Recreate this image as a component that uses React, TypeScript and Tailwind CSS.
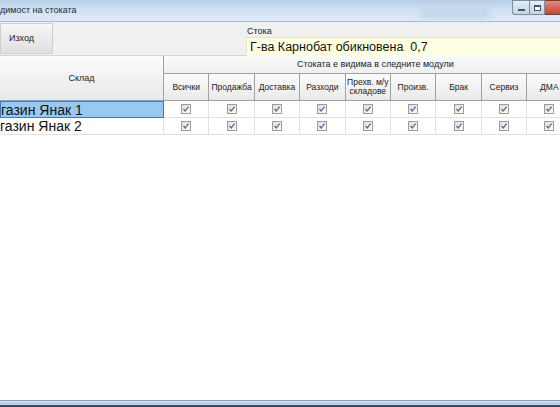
import React from 'react';

const modules = ['Всички', 'Продажба', 'Доставка', 'Разходи', 'Прехв. м/у складове', 'Произв.', 'Брак', 'Сервиз', 'ДМА'];
const rows = ['газин Янак 1', 'газин Янак 2'];

function Check() {
  return (
    <svg width="10" height="10" viewBox="0 0 10 10">
      <defs>
        <linearGradient id="cb" x1="0" y1="0" x2="1" y2="1">
          <stop offset="0" stopColor="#dcdcdc" />
          <stop offset="1" stopColor="#ffffff" />
        </linearGradient>
      </defs>
      <rect x="0.5" y="0.5" width="9" height="9" fill="url(#cb)" stroke="#9a9b9b" />
      <path d="M2.5 5 L4.2 7 L7.6 2.6" fill="none" stroke="#5a6c9c" strokeWidth="1.3" />
    </svg>
  );
}

export default function App() {
  return (
    <div className="w-[560px] h-[407px] overflow-hidden flex flex-col bg-white" style={{ fontFamily: '"Liberation Sans", Arial, sans-serif' }}>
      {/* title bar */}
      <div className="h-[22px] shrink-0 flex items-start bg-gradient-to-b from-[#b7cde6] via-[#d3e3f4] to-[#dce9f7] border-b border-[#a9bcd3] relative">
        <span className="text-[9px] text-[#1e2a3a] mt-[6px] leading-none">димост на стоката</span>
        <div className="absolute left-[420px] top-[10px] w-[70px] h-[8px] bg-[#b8cbe0] blur-[3px] opacity-70" />
        <div className="ml-auto flex h-[15px]">
          <div className="w-[17px] border border-[#7d8ea3] border-r-0 rounded-bl-[3px] bg-gradient-to-b from-[#e6eef8] to-[#c4d3e5] flex items-end justify-center pb-[3px]">
            <div className="w-[7px] h-[2px] bg-white border border-[#455468]" />
          </div>
          <div className="w-[16px] border border-[#7d8ea3] bg-gradient-to-b from-[#e6eef8] to-[#c4d3e5] flex items-center justify-center">
            <div className="w-[7px] h-[6px] bg-white border border-[#455468] border-t-2" />
          </div>
          <div className="w-[15px] bg-gradient-to-b from-[#e08b80] to-[#c4442f] border-y border-[#7d3a30]" />
        </div>
      </div>

      {/* toolbar */}
      <div className="h-[34px] shrink-0 flex bg-[#f0f0f0] border-b border-[#d4d4d4]">
        <div className="w-[53px] h-[31px] mt-[1px] border border-[#cfcfcf] bg-gradient-to-b from-[#f6f6f6] to-[#e0e0e0] flex items-center pl-[8px] text-[9px] text-[#222]">
          Изход
        </div>
        <div className="ml-[193px] flex-1 flex flex-col">
          <span className="text-[9px] text-[#222] leading-none mt-[5px] ml-[1px]">Стока</span>
          <div className="mt-[1px] h-[20px] bg-[#ffffe1] border-y border-l border-[#e4e4d0] flex items-center pl-[3px] text-[12.5px] text-[#111]">
            Г-ва Карнобат обикновена&nbsp;&nbsp;0,7
          </div>
        </div>
      </div>

      {/* grid */}
      <div className="flex-1 bg-white">
        <div className="grid grid-cols-[164px_repeat(9,45.4px)] w-max text-[9px] text-[#222]">
          <div className="row-span-2 h-[45px] bg-gradient-to-b from-[#fbfbfb] to-[#e9e9e9] border-r border-b border-[#a0a0a0] flex items-center justify-center pt-[2px]">
            Склад
          </div>
          <div className="col-span-9 h-[18px] bg-gradient-to-b from-[#fbfbfb] to-[#efefef] border-b border-[#a0a0a0] flex items-center pl-[133px] pt-[1px]">
            Стоката е видима в следните модули
          </div>
          {modules.map((m) => (
            <div
              key={m}
              className="h-[27px] bg-gradient-to-b from-[#fbfbfb] to-[#eaeaea] border-r border-b border-[#a0a0a0] flex items-center justify-center text-center leading-[9px] text-[8.5px]"
            >
              {m === 'Прехв. м/у складове' ? (
                <span>
                  Прехв. м/у
                  <br />
                  складове
                </span>
              ) : (
                m
              )}
            </div>
          ))}
          {rows.map((r, i) => (
            <React.Fragment key={r}>
              <div
                className={
                  i === 0
                    ? 'h-[17px] bg-[#99c9ef] border border-[#3a7bc2] flex items-center text-[14px] text-[#111] leading-none'
                    : 'h-[17px] border-r border-b border-[#e2e2e2] flex items-center text-[14px] text-[#111] leading-none'
                }
              >
                {r}
              </div>
              {modules.map((m) => (
                <div key={m} className="h-[17px] border-r border-b border-[#e2e2e2] flex items-center justify-center">
                  <Check />
                </div>
              ))}
            </React.Fragment>
          ))}
        </div>
      </div>

      {/* bottom frame */}
      <div className="shrink-0 h-[7px] flex flex-col">
        <div className="h-[1px] bg-[#8fa3a3]" />
        <div className="h-[2px] bg-[#c9dbf0]" />
        <div className="h-[1px] bg-[#aec6e6]" />
        <div className="h-[1px] bg-[#c7d9ee]" />
        <div className="h-[2px] bg-[#3a4a5e]" />
      </div>
    </div>
  );
}
